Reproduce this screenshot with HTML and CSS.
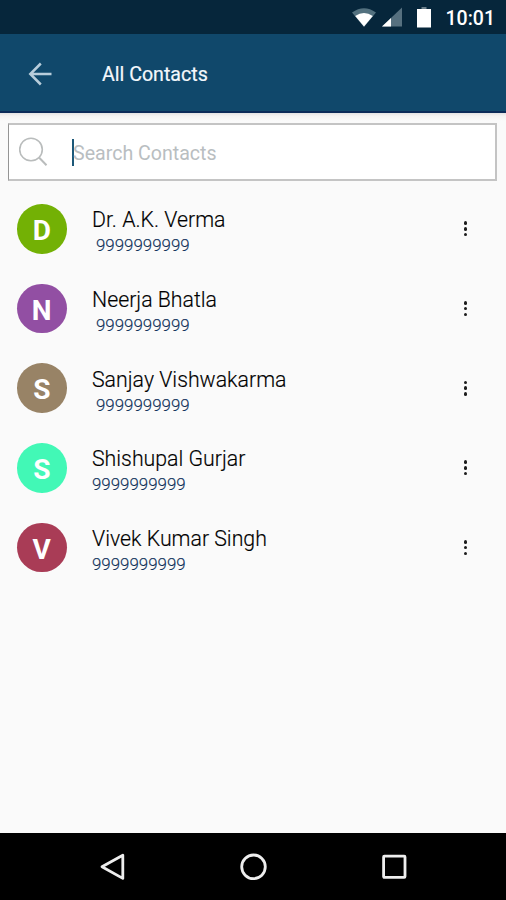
FILE: index.html
```html
<!DOCTYPE html>
<html lang="en">
<head>
<meta charset="utf-8">
<title>All Contacts</title>
<link rel="stylesheet" href="styles.css">
</head>
<body>
<div class="status">
  <svg class="status-icons" viewBox="0 0 82 24" width="82" height="24">
    <path d="M0 5.5Q12 -3 24 5.5L12 20Z" fill="#53717f"/>
    <path d="M3.2 9Q12 3.2 20.8 9L12 19.5Z" fill="#fff"/>
    <path d="M50 .5V19.500H30Z" fill="#56707f"/>
    <path d="M39 11V19.500H30Z" fill="#fff"/>
    <path d="M69.500 0h5v2h-5z" fill="#6b7f8b"/>
    <path d="M65 2h14v18.500H65z" fill="#fff"/>
  </svg>
  <span class="clock">10:01</span>
</div>
<header class="appbar">
  <svg class="back" viewBox="0 0 24 24" width="24" height="24"><path d="M23.500 12H2M12.800 1.500L2.300 12l10.500 10.500" fill="none" stroke="#b8cddb" stroke-width="2.500"/></svg>
  <h1 class="title">All Contacts</h1>
</header>
<main class="content">
  <div class="search">
    <svg class="lens" viewBox="0 0 30 30" width="30" height="30" fill="none" stroke="#b9bcbc" stroke-width="1.600"><circle cx="12" cy="12.500" r="11.300"/><path d="M20 20.500l7.500 7.700" stroke-width="2"/></svg>
    <span class="caret"></span>
    <span class="hint">Search Contacts</span>
  </div>
  <ul class="list">
    <li class="row"><span class="avatar green">D</span><div class="info"><div class="name">Dr. A.K. Verma</div><div class="phone spaced">9999999999</div></div><span class="more"><i></i><i></i><i></i></span></li>
    <li class="row"><span class="avatar purple">N</span><div class="info"><div class="name">Neerja Bhatla</div><div class="phone spaced">9999999999</div></div><span class="more"><i></i><i></i><i></i></span></li>
    <li class="row"><span class="avatar brown">S</span><div class="info"><div class="name">Sanjay Vishwakarma</div><div class="phone spaced">9999999999</div></div><span class="more"><i></i><i></i><i></i></span></li>
    <li class="row"><span class="avatar mint">S</span><div class="info"><div class="name">Shishupal Gurjar</div><div class="phone">9999999999</div></div><span class="more"><i></i><i></i><i></i></span></li>
    <li class="row"><span class="avatar red">V</span><div class="info"><div class="name">Vivek Kumar Singh</div><div class="phone">9999999999</div></div><span class="more"><i></i><i></i><i></i></span></li>
  </ul>
</main>
<nav class="navbar">
  <svg viewBox="0 0 28 28" width="28" height="28"><path d="M24.800 2.200V25.400L4 13.800Z"/></svg>
  <svg viewBox="0 0 28 28" width="28" height="28"><circle cx="14.500" cy="13.800" r="11.800"/></svg>
  <svg viewBox="0 0 28 28" width="28" height="28"><rect x="3.600" y="3.200" width="21.400" height="21.200" rx=".8"/></svg>
</nav>
</body>
</html>
```
FILE: styles.css
```css
* { box-sizing: border-box; }
body {
  margin: 0;
  width: 506px;
  height: 900px;
  display: flex;
  flex-direction: column;
  overflow: hidden;
  background: #fafafa;
  font-family: Roboto, "Liberation Sans", sans-serif;
}
.status {
  height: 34px;
  flex: none;
  display: flex;
  justify-content: flex-end;
  padding: 7px 11px 0 0;
  background: #06263b;
}
.status-icons { margin-right: 12px; }
.clock {
  color: #fff;
  font-size: 19.500px;
  font-weight: 500;
  line-height: 23px;
}
.appbar {
  height: 79px;
  flex: none;
  display: flex;
  align-items: center;
  padding-left: 28px;
  background: #10486b;
  border-bottom: 2px solid #0b2a58;
}
.back { margin-top: 2px; }
.title {
  margin: 5px 0 0 50px;
  font-size: 19.600px;
  font-weight: 400;
  line-height: 24px;
  color: #f4f8fc;
  -webkit-text-stroke: .2px #f4f8fc;
}
.content {
  flex: 1;
  padding: 10px 9px 0 8px;
  background: linear-gradient(#e3e1e2, #f4f2f2 3px, #fafafa 8px);
}
.search {
  height: 58px;
  display: flex;
  align-items: center;
  padding-left: 9px;
  border: 2px solid #c4c4c4;
  border-left: 1px solid #949494;
  background: #fff;
}
.lens { margin-left: 1px; }
.caret {
  width: 2px;
  height: 27px;
  margin-left: 23px;
  background: #1c5878;
}
.hint {
  margin: 3px 0 0 -1px;
  font-size: 19.600px;
  line-height: 24px;
  color: #b9bec1;
}
.list {
  margin: 8px 0 0;
  padding: 0;
  list-style: none;
}
.row {
  height: 79.700px;
  display: flex;
  align-items: center;
  padding-left: 9px;
}
.avatar {
  width: 49.500px;
  height: 49.500px;
  border-radius: 50%;
  color: #fff;
  font-size: 28px;
  font-weight: 700;
  line-height: 53px;
  text-align: center;
}
.green { background: #73b105; }
.purple { background: #924fa3; }
.brown { background: #988366; }
.mint { background: #42f8b6; }
.red { background: #a93c56; }
.info {
  flex: 1;
  margin: 6px 0 0 25.500px;
}
.name {
  font-size: 21.300px;
  font-weight: 300;
  line-height: 28px;
  color: #000;
  -webkit-text-stroke: .15px #000;
  white-space: nowrap;
}
.phone {
  font-size: 16.900px;
  font-weight: 300;
  line-height: 23px;
  color: #0d3059;
  -webkit-text-stroke: .15px #0d3059;
}
.spaced { padding-left: 4px; }
.more {
  width: 3.600px;
  margin-right: 29.700px;
  display: flex;
  flex-direction: column;
  gap: 2.200px;
}
.more i {
  width: 3.600px;
  height: 3.600px;
  border-radius: 50%;
  background: #1c1c1c;
}
.navbar {
  height: 67px;
  flex: none;
  display: flex;
  justify-content: center;
  align-items: center;
  gap: 113px;
  background: #000;
}
.navbar svg {
  fill: none;
  stroke: #eee;
  stroke-width: 2.800;
  stroke-linejoin: round;
}
```
